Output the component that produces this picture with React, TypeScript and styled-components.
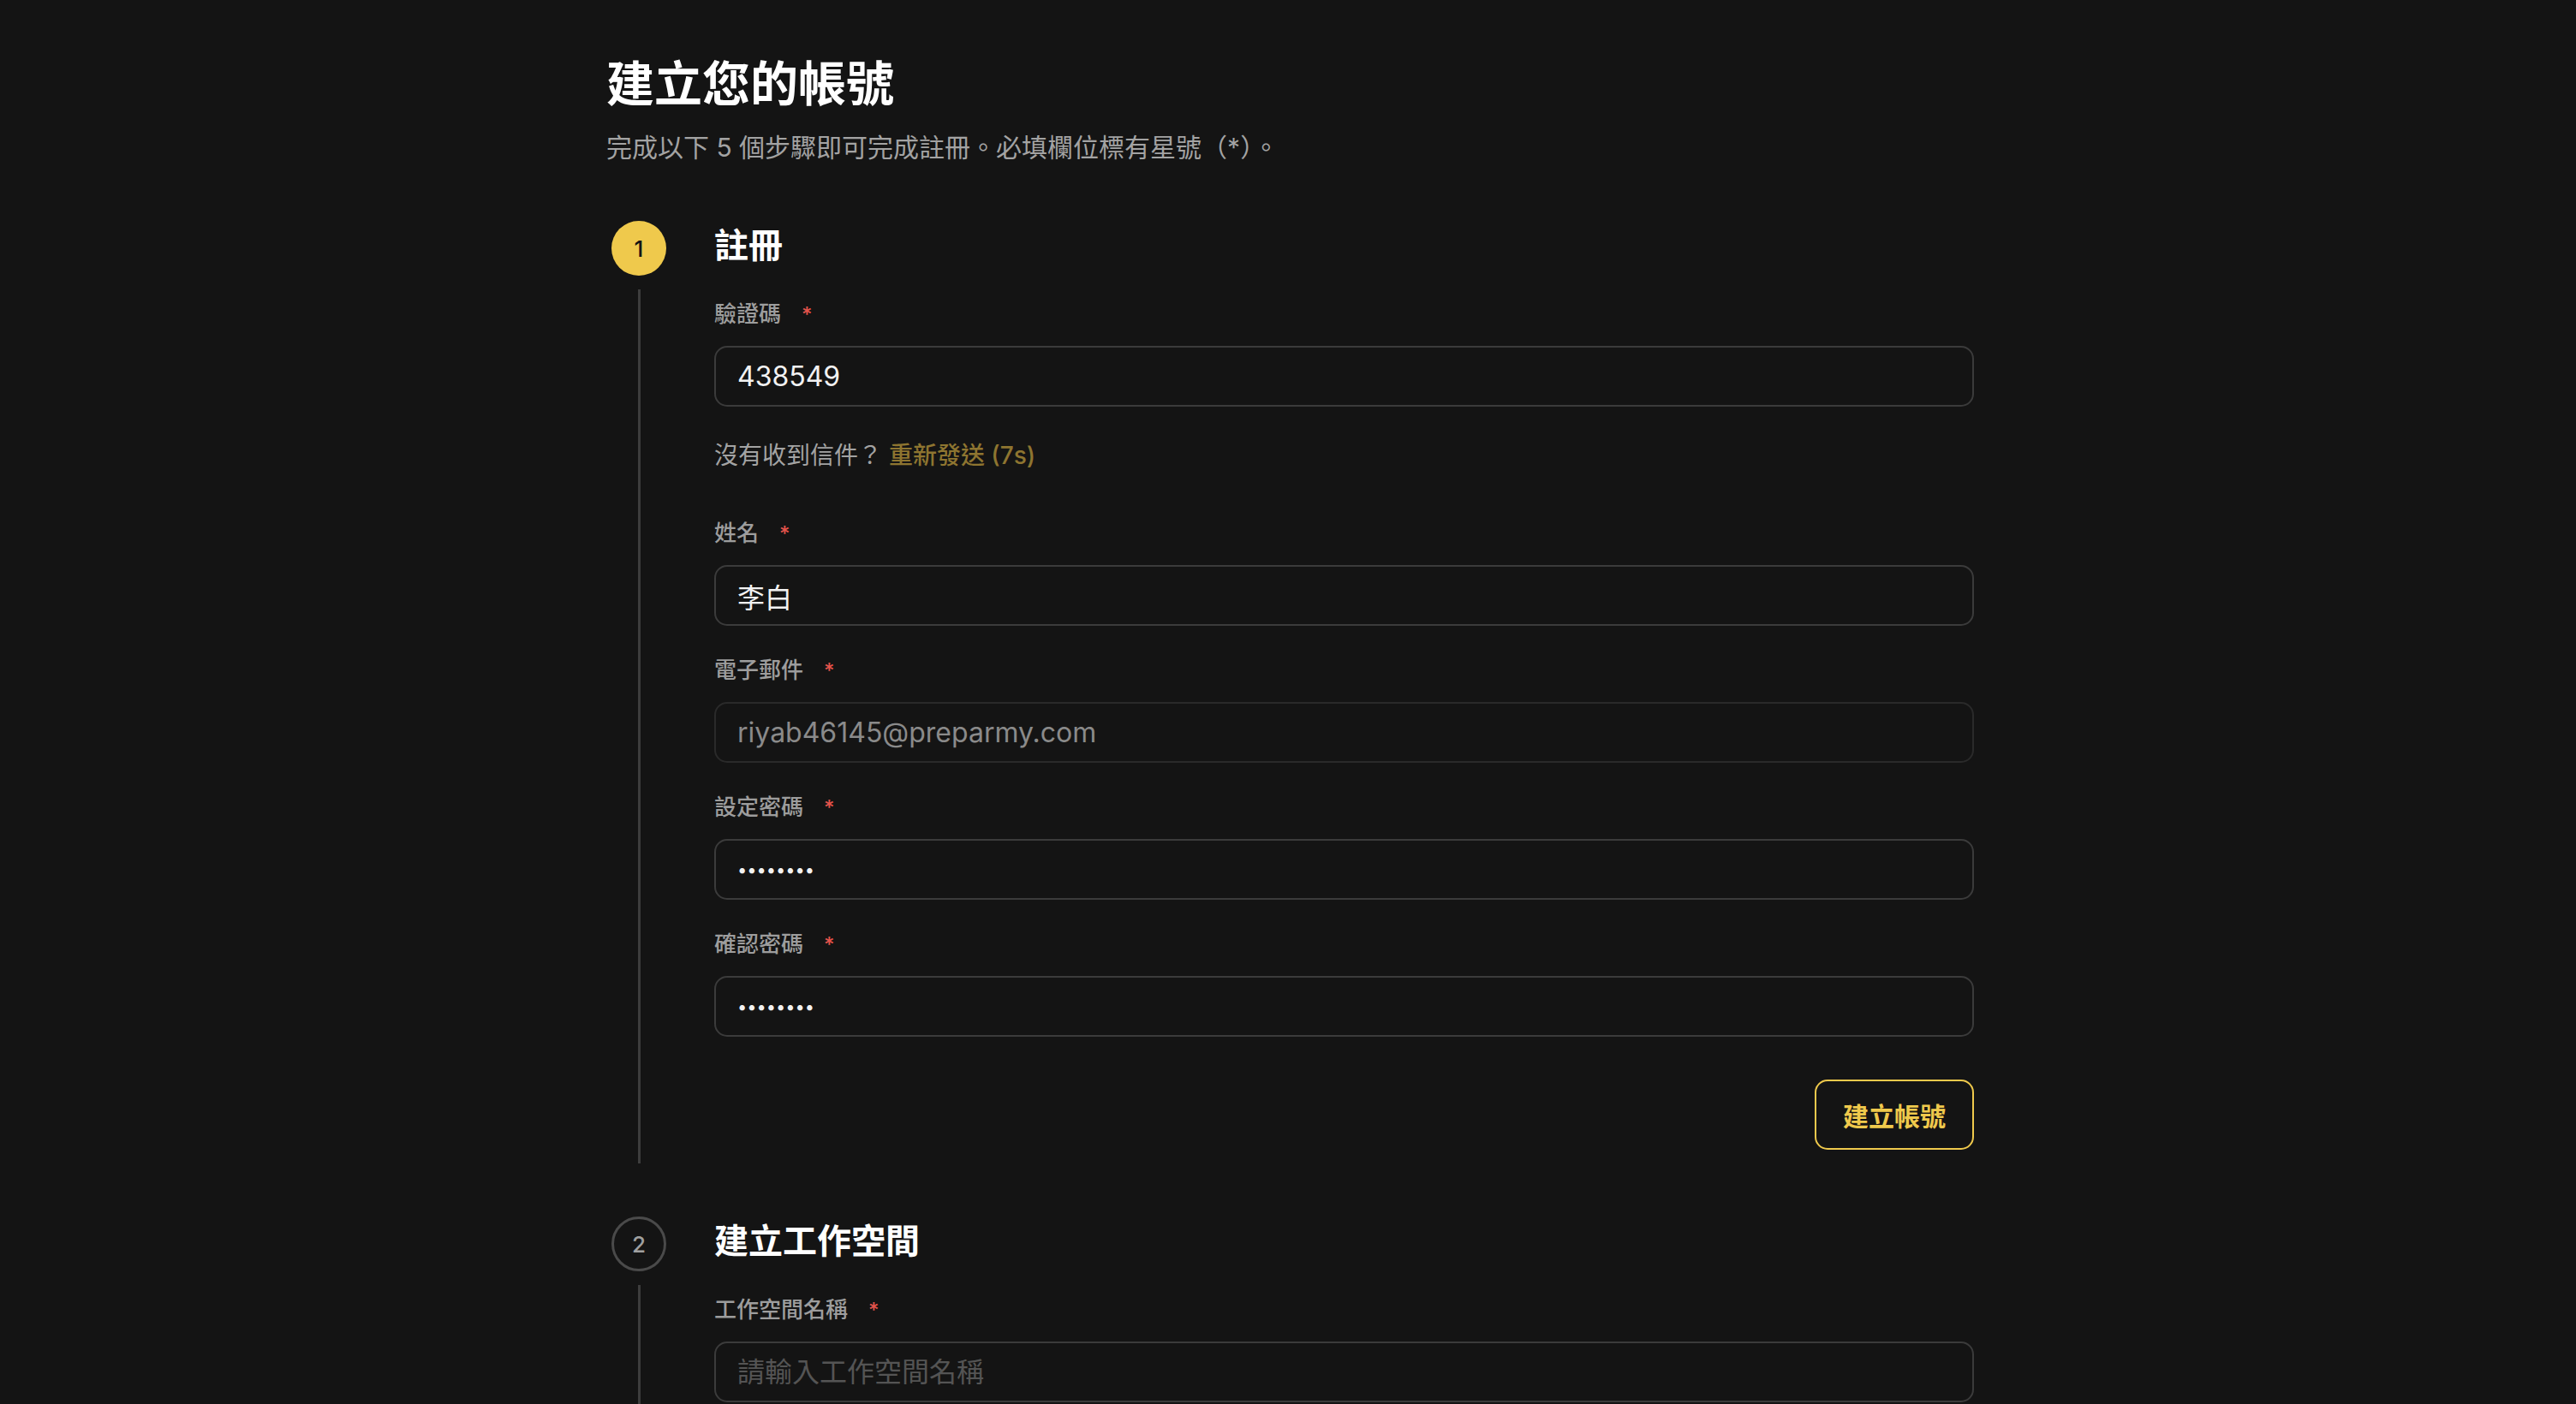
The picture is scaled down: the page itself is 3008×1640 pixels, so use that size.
import React from "react";
import styled, { createGlobalStyle, css } from "styled-components";

const FONT = `"Inter", "Noto Sans CJK TC", "Noto Sans", sans-serif`;

const GlobalStyle = createGlobalStyle`
  html, body {
    margin: 0;
    padding: 0;
    background: #141414;
  }
  body {
    font-family: ${FONT};
    color: #f5f5f5;
    -webkit-font-smoothing: antialiased;
  }
  * { box-sizing: border-box; }
`;

const Page = styled.main`
  width: 1602px;
  margin: 0 auto;
  padding: 62px 0 0 5px;
`;

const Heading = styled.h1`
  margin: 0;
  font-size: 56px;
  line-height: 73px;
  font-weight: 700;
  color: #ffffff;
`;

const Subtitle = styled.p`
  margin: 16px 0 0;
  font-size: 30px;
  line-height: 42px;
  font-weight: 400;
  color: #a3a3a3;
`;

const Steps = styled.div`
  margin-top: 65px;
  display: flex;
  flex-direction: column;
  gap: 62px;
`;

const Step = styled.section`
  display: grid;
  grid-template-columns: 76px 1fr;
  grid-template-rows: 64px auto;
  column-gap: 50px;
`;

const Badge = styled.div<{ $active?: boolean }>`
  width: 64px;
  height: 64px;
  border-radius: 50%;
  justify-self: center;
  display: flex;
  align-items: center;
  justify-content: center;
  font-size: 26px;
  font-weight: 500;
  ${({ $active }) =>
    $active
      ? css`
          background: #efc94c;
          color: #141414;
        `
      : css`
          border: 3px solid #4a4a4a;
          color: #a0a0a0;
        `}
`;

const StepTitle = styled.h2`
  margin: 0;
  padding-top: 2px;
  align-self: start;
  font-size: 40px;
  line-height: 54px;
  font-weight: 700;
  color: #ffffff;
`;

const Rail = styled.div`
  justify-self: center;
  width: 3px;
  margin-top: 16px;
  background: #3d3d3d;
`;

const StepBody = styled.div`
  padding: 27px 0 16px;
  display: flex;
  flex-direction: column;
  gap: 34px;
`;

const Field = styled.div`
  display: flex;
  flex-direction: column;
  gap: 19px;
`;

const Label = styled.label`
  display: block;
  height: 36px;
  font-size: 26px;
  line-height: 36px;
  font-weight: 500;
  color: #9d9d9d;
`;

const Required = styled.span`
  margin-left: 24px;
  color: #e5534b;
  font-size: 24px;
  line-height: 0;
`;

const Input = styled.input<{ $masked?: boolean }>`
  display: block;
  width: 100%;
  height: 71px;
  padding: 0 25px;
  border: 2px solid #3b3b3b;
  border-radius: 15px;
  background: transparent;
  font-family: ${FONT};
  font-size: ${({ $masked }) => ($masked ? "20px" : "32px")};
  color: #f2f2f2;
  outline: none;

  &::placeholder {
    color: #545454;
  }

  &:disabled {
    border-color: #2a2a2a;
    color: #8a8a8a;
    -webkit-text-fill-color: #8a8a8a;
  }
`;

const Resend = styled.p`
  margin: 3px 0 19px;
  height: 40px;
  font-size: 28px;
  line-height: 40px;
  color: #a3a3a3;
`;

const ResendLink = styled.span`
  color: #8e7530;
  font-weight: 500;
`;

const Actions = styled.div`
  margin-top: 16px;
  display: flex;
  justify-content: flex-end;
`;

const OutlineButton = styled.button`
  height: 82px;
  padding: 0 31px;
  border: 2px solid #efc94c;
  border-radius: 15px;
  background: transparent;
  color: #efc94c;
  font-family: ${FONT};
  font-size: 30px;
  font-weight: 700;
  cursor: pointer;
`;

type FieldProps = {
  label: string;
  value?: string;
  placeholder?: string;
  type?: string;
  disabled?: boolean;
};

function FormField({ label, value, placeholder, type = "text", disabled }: FieldProps) {
  return (
    <Field>
      <Label>
        {label}
        <Required>*</Required>
      </Label>
      <Input
        type={type}
        $masked={type === "password"}
        defaultValue={value}
        placeholder={placeholder}
        disabled={disabled}
      />
    </Field>
  );
}

export default function App() {
  return (
    <>
      <GlobalStyle />
      <Page>
        <Heading>建立您的帳號</Heading>
        <Subtitle>完成以下 5 個步驟即可完成註冊。必填欄位標有星號（*）。</Subtitle>
        <Steps>
          <Step>
            <Badge $active>1</Badge>
            <StepTitle>註冊</StepTitle>
            <Rail />
            <StepBody>
              <FormField label="驗證碼" value="438549" />
              <Resend>
                沒有收到信件？ <ResendLink>重新發送 (7s)</ResendLink>
              </Resend>
              <FormField label="姓名" value="李白" />
              <FormField label="電子郵件" value="riyab46145@preparmy.com" disabled />
              <FormField label="設定密碼" value="12345678" type="password" />
              <FormField label="確認密碼" value="12345678" type="password" />
              <Actions>
                <OutlineButton type="button">建立帳號</OutlineButton>
              </Actions>
            </StepBody>
          </Step>
          <Step>
            <Badge>2</Badge>
            <StepTitle>建立工作空間</StepTitle>
            <Rail />
            <StepBody>
              <FormField label="工作空間名稱" placeholder="請輸入工作空間名稱" />
            </StepBody>
          </Step>
        </Steps>
      </Page>
    </>
  );
}
